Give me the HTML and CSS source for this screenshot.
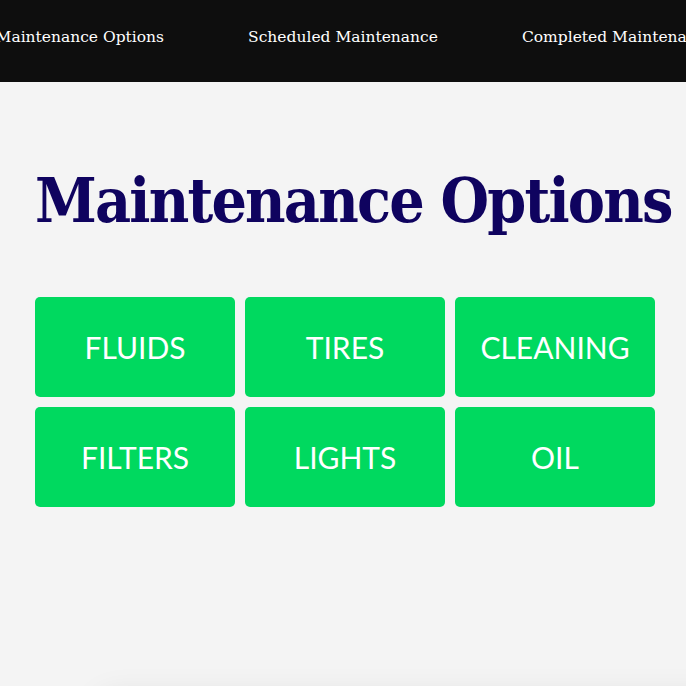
FILE: index.html
```html
<!DOCTYPE html>
<html>
<head>
<meta charset="utf-8">
<link rel="stylesheet" href="styles.css">
</head>
<body>
<nav class="topnav">
  <a class="nav-item nav-left">Maintenance Options</a>
  <a class="nav-item">Scheduled Maintenance</a>
  <a class="nav-item nav-right">Completed Maintenance</a>
</nav>
<main class="content">
  <h1 class="title">Maintenance Options</h1>
  <div class="grid">
    <div class="tile">FLUIDS</div>
    <div class="tile">TIRES</div>
    <div class="tile">CLEANING</div>
    <div class="tile">FILTERS</div>
    <div class="tile">LIGHTS</div>
    <div class="tile">OIL</div>
  </div>
  <div class="card"></div>
</main>
</body>
</html>
```
FILE: styles.css
```css
html, body {
  margin: 0;
  padding: 0;
  background: #f4f4f4;
  overflow: hidden;
}
.topnav {
  height: 82px;
  background: #0e0e0e;
  display: grid;
  grid-template-columns: minmax(0, 1fr) auto minmax(0, 1fr);
  align-items: center;
  column-gap: 84px;
  white-space: nowrap;
}
.nav-item {
  color: #ffffff;
  font-family: "DejaVu Serif", serif;
  font-size: 15.5px;
  padding-bottom: 8px;
}
.nav-left {
  justify-self: end;
}
.nav-right {
  justify-self: start;
}
.content {
  width: 620px;
  margin-left: 35px;
}
.title {
  margin: 0;
  padding-top: 84px;
  font-family: "DejaVu Serif", serif;
  font-weight: bold;
  font-stretch: condensed;
  font-size: 62px;
  line-height: 70px;
  letter-spacing: -1.8px;
  color: #0f035f;
  white-space: nowrap;
}
.grid {
  margin-top: 61px;
  display: grid;
  grid-template-columns: repeat(3, 200px);
  grid-auto-rows: 100px;
  gap: 10px;
}
.tile {
  background: #00d95f;
  border-radius: 5px;
  color: #ffffff;
  font-family: Lato, sans-serif;
  font-size: 30px;
  display: flex;
  align-items: center;
  justify-content: center;
}
.card {
  margin-top: 186px;
  margin-left: 60px;
  width: 700px;
  height: 200px;
  background: #f4f4f4;
  box-shadow: 0 0 30px rgba(0, 0, 0, 0.08);
  border-radius: 20px;
}
```
